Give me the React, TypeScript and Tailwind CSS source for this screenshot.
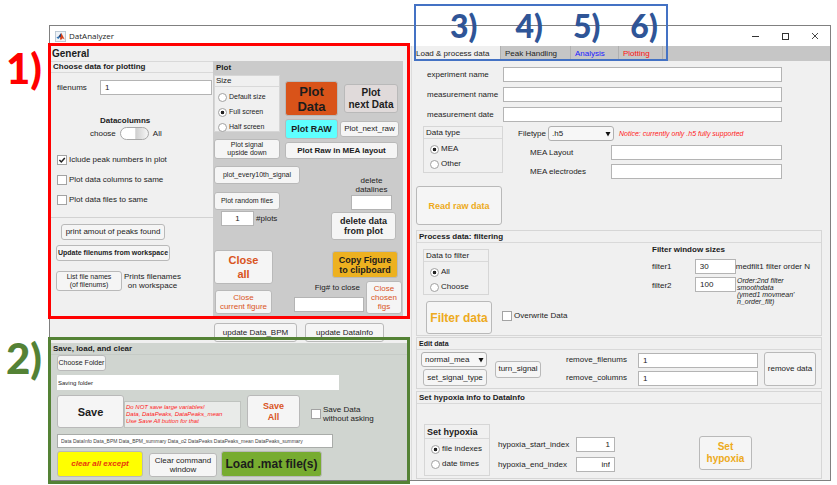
import { useId, useState, type ReactNode } from "react";
import clsx from "clsx";

const ARIAL = "font-['Liberation_Sans',Arial,sans-serif]";

function Btn({ className, children }: { className?: string; children: ReactNode }) {
  return (
    <button
      type="button"
      className={clsx(
        "flex shrink-0 items-center justify-center rounded-[3px] border border-[#b9b9b9] text-center whitespace-nowrap",
        className,
      )}
    >
      <span>{children}</span>
    </button>
  );
}

function TextBox({ id, label, value = "", className }: { id?: string; label?: string; value?: string; className?: string }) {
  return (
    <input
      id={id}
      type="text"
      aria-label={label}
      defaultValue={value}
      className={clsx("h-[15px] min-w-0 border border-[#b4b4b4] bg-white px-1 text-[#222]", className)}
    />
  );
}

function Field({
  label,
  value,
  className,
  labelClass,
  inputClass,
}: {
  label: string;
  value?: string;
  className?: string;
  labelClass: string;
  inputClass: string;
}) {
  const id = useId();
  return (
    <div className={clsx("flex items-center", className)}>
      <label htmlFor={id} className={clsx("shrink-0 whitespace-nowrap", labelClass)}>
        {label}
      </label>
      <TextBox id={id} value={value} className={inputClass} />
    </div>
  );
}

function Check({ label, checked, className }: { label: ReactNode; checked?: boolean; className?: string }) {
  const [on, setOn] = useState(!!checked);
  return (
    <label className={clsx("flex items-center gap-[2px]", className)}>
      <span className="relative flex size-[10px] shrink-0">
        <input
          type="checkbox"
          checked={on}
          onChange={() => setOn(!on)}
          className="size-[10px] appearance-none border border-[#a3a3a3] bg-white"
        />
        {on && (
          <svg viewBox="0 0 10 10" className="pointer-events-none absolute inset-0 size-[10px]">
            <path d="M2.4 5 L4.3 7 L7.8 2.9" fill="none" stroke="#222" strokeWidth="1.5" />
          </svg>
        )}
      </span>
      <span>{label}</span>
    </label>
  );
}

function Radios({
  title,
  options,
  selected,
  className,
  titleClass,
  listClass,
}: {
  title: string;
  options: string[];
  selected: number;
  className?: string;
  titleClass: string;
  listClass: string;
}) {
  const name = useId();
  return (
    <div role="radiogroup" aria-label={title} className={clsx("shrink-0 border border-[#d6d6d6] bg-[#f0f0f0]", className)}>
      <div className={clsx("flex items-center border-b border-[#d9d9d9]", titleClass)}>{title}</div>
      <div className={clsx("flex flex-col", listClass)}>
        {options.map((option, i) => (
          <label key={option} className="flex items-center gap-[2px] whitespace-nowrap">
            <input
              type="radio"
              name={name}
              defaultChecked={i === selected}
              className="size-[9px] appearance-none rounded-full border border-[#a0a0a0] bg-white checked:bg-[radial-gradient(circle,#222_32%,#fff_42%)]"
            />
            <span>{option}</span>
          </label>
        ))}
      </div>
    </div>
  );
}

function Pick({ id, label, value, className }: { id?: string; label?: string; value: string; className?: string }) {
  return (
    <span className={clsx("relative flex shrink-0", className)}>
      <select
        id={id}
        aria-label={label}
        defaultValue={value}
        className="h-[15px] w-full appearance-none rounded-[3px] border border-[#b0b0b0] bg-[#f7f7f7] pl-[3px] text-[#222]"
      >
        <option>{value}</option>
      </select>
      <svg viewBox="0 0 6 5" className="pointer-events-none absolute top-[6px] right-[3px] h-[5px] w-[6px]">
        <path d="M0.5 0h5L3 4.5z" fill="#111" />
      </svg>
    </span>
  );
}

function MatlabLogo() {
  return (
    <svg viewBox="0 0 12 12" className="size-[11px]">
      <rect x="0.5" y="0.5" width="11" height="11" fill="#eef3f8" stroke="#b9c6d2" />
      <path d="M1.5 7 L4 5.6 L5.2 7.2 L3.6 8.6z" fill="#2f74b5" />
      <path d="M4 5.6 L6.8 2 L6.4 6.5 L5.2 7.2z" fill="#243c6b" />
      <path d="M6.8 2 L10.6 9.2 L8.4 8 L6.2 10 L5.2 7.2 L6.4 6.5z" fill="#d6421b" />
    </svg>
  );
}

const SMALL = "text-[7px] leading-[8px]";
const LIGHT = "bg-[#f5f5f5]";
const AMBER = "text-[#edaa20]";
const RUST = "text-[#d9541e]";
const CALLOUT = "pointer-events-none absolute font-['Lato',sans-serif] font-black";

function ChoosePanel() {
  const filenums = useId();
  return (
    <div className="w-[163px] shrink-0">
      <h2 className="flex h-3 items-center border-y border-[#d9d9d9] pl-[3px] font-bold">Choose data for plotting</h2>
      <div className="flex flex-col border-b border-[#d2d2d2] pt-[7px] pb-3 pl-[7px]">
        <div className="flex items-center pr-px">
          <label htmlFor={filenums} className="w-[43px]">filenums</label>
          <TextBox id={filenums} value="1" className="flex-1" />
        </div>
        <div className="mt-5 flex flex-col">
          <span className="pl-[43px] leading-[12px] font-bold">Datacolumns</span>
          <label className="flex items-center gap-1 pl-[33px]">
            <span>choose</span>
            <input
              type="checkbox"
              role="switch"
              className="h-[13px] w-[29px] appearance-none rounded-full border border-[#a8a8a8] bg-[linear-gradient(90deg,#fff_50%,#cfcfcf_55%,#f2f2f2_95%)]"
            />
            <span>All</span>
          </label>
        </div>
        <div className="mt-[15px] flex flex-col gap-[10px]">
          <Check label="Iclude peak numbers in plot" checked />
          <Check label="Plot data columns to same" />
          <Check label="Plot data files to same" />
        </div>
      </div>
      <div className="flex flex-col items-start pt-[6px] pl-[6px]">
        <Btn className={clsx(LIGHT, "ml-[5px] h-4 w-[104px]")}>print amout of peaks found</Btn>
        <Btn className={clsx(LIGHT, SMALL, "mt-[5px] h-4 w-[114px] font-bold")}>Update filenums from workspace</Btn>
        <div className="mt-[10px] flex items-center gap-[2px]">
          <Btn className={clsx(LIGHT, SMALL, "h-5 w-[66px]")}>
            List file names
            <br />
            (of filenums)
          </Btn>
          <span className="text-center leading-[9px]">
            Prints filenames
            <br />
            on workspace
          </span>
        </div>
      </div>
    </div>
  );
}

function PlotPanel() {
  const plots = useId();
  const lines = useId();
  const fig = useId();
  return (
    <div className="mr-2 min-w-0 flex-1 bg-[#cbcbcb] pl-px">
      <h2 className="flex h-[14px] items-center pl-[2px] font-bold">Plot</h2>
      <div className="flex">
        <div className="flex w-[66px] shrink-0 flex-col gap-[7px]">
          <Radios
            title="Size"
            options={["Default size", "Full screen", "Half screen"]}
            selected={1}
            className="h-[57px]"
            titleClass="h-[11px] pl-px"
            listClass="gap-[5px] pt-[5px] pl-[3px] text-[7px] leading-[10px]"
          />
          <Btn className={clsx(LIGHT, SMALL, "h-5")}>
            Plot signal
            <br />
            upside down
          </Btn>
        </div>
        <div className="ml-[5px] flex flex-col gap-[3px] pt-[6px] font-bold">
          <div className="flex items-center gap-[6px]">
            <Btn className="h-[35px] w-[53px] bg-[#d95319] text-[13px] leading-[15px]">
              Plot
              <br />
              Data
            </Btn>
            <Btn className="h-[29px] w-[54px] bg-[#e0dada] text-[10px] leading-[12px]">
              Plot
              <br />
              next Data
            </Btn>
          </div>
          <div className="flex items-center gap-[2px]">
            <Btn className="h-5 w-[53px] bg-[#5effff] text-[9px]">Plot RAW</Btn>
            <Btn className={clsx(LIGHT, "h-4 w-[59px] font-normal")}>Plot_next_raw</Btn>
          </div>
          <Btn className={clsx(LIGHT, "h-[17px] w-[113px]")}>Plot Raw in MEA layout</Btn>
        </div>
      </div>
      <div className="flex">
        <div className="flex w-[86px] shrink-0 flex-col items-start pt-[7px] pb-[2px]">
          <Btn className={clsx(LIGHT, SMALL, "h-[18px] w-[86px]")}>plot_every10th_signal</Btn>
          <Btn className={clsx(LIGHT, SMALL, "mt-2 h-[18px] w-[66px]")}>Plot random files</Btn>
          <div className="mt-px ml-[7px] flex items-center gap-[2px]">
            <TextBox id={plots} value="1" className="w-[33px] text-center" />
            <label htmlFor={plots}>#plots</label>
          </div>
          <Btn className={clsx(LIGHT, RUST, "mt-6 h-[34px] w-[59px] text-[11px] leading-[14px] font-bold")}>
            Close
            <br />
            all
          </Btn>
          <Btn className={clsx(LIGHT, RUST, "mt-[6px] ml-px h-6 w-[57px] leading-[9px]")}>
            Close
            <br />
            current figure
          </Btn>
        </div>
        <div className="flex min-w-0 flex-1 flex-col items-end pt-[17px]">
          <div className="mr-[11px] flex w-[41px] flex-col">
            <label htmlFor={lines} className="pb-px text-center leading-[9px]">
              delete datalines
            </label>
            <TextBox id={lines} className="w-full" />
          </div>
          <Btn className={clsx(LIGHT, "mt-[2px] mr-[7px] h-7 w-[65px] text-[9px] leading-[10px] font-bold")}>
            delete data
            <br />
            from plot
          </Btn>
          <Btn className="mt-[11px] mr-[5px] h-[27px] w-[66px] bg-[#edb120] text-[9px] leading-[10px] font-bold">
            Copy Figure
            <br />
            to clipboard
          </Btn>
          <div className="mt-[3px] mr-px flex shrink-0 gap-[2px]">
            <div className="flex w-[70px] flex-col pt-[2px]">
              <label htmlFor={fig} className="pr-1 pb-1 text-right">
                Fig# to close
              </label>
              <TextBox id={fig} className="w-full" />
            </div>
            <Btn className={clsx(LIGHT, RUST, "h-[33px] w-9 leading-[9px]")}>
              Close
              <br />
              chosen
              <br />
              figs
            </Btn>
          </div>
        </div>
      </div>
    </div>
  );
}

function SavePanel() {
  return (
    <section className="relative mr-1 ml-px bg-[#d0d5d0] pb-[3px]">
      <h2 className="flex h-3 items-center border-b border-[#c6cbc6] pl-[2px] font-bold">Save, load, and clear</h2>
      <div className="flex flex-col items-start pl-[6px]">
        <Btn className={clsx(LIGHT, "h-4 w-[49px] text-[7px]")}>Choose Folder</Btn>
        <div className="mt-1 flex w-full pr-[68px]">
          <input
            type="text"
            aria-label="Saving folder"
            defaultValue="Saving folder"
            className="h-[15px] min-w-0 flex-1 bg-white pl-px text-[6px]"
          />
        </div>
        <div className="mt-[5px] flex items-end">
          <Btn className={clsx(LIGHT, "h-[33px] w-[67px] text-[11px] font-bold")}>Save</Btn>
          <p className="flex h-[27px] w-[117px] items-center border border-[#bfc3bf] bg-[#e9ebe9] pl-px text-[6px] leading-[7px] whitespace-nowrap text-[#ff1a1a] italic">
            Do NOT save large variables!
            <br />
            Data, DataPeaks, DataPeaks_mean
            <br />
            Use Save All button for that
          </p>
          <Btn className={clsx(LIGHT, RUST, "ml-[6px] h-[33px] w-[53px] text-[9px] leading-[11px] font-bold")}>
            Save
            <br />
            All
          </Btn>
          <Check
            className="mb-[5px] ml-[11px] leading-[9px]"
            label={
              <>
                Save Data
                <br />
                without asking
              </>
            }
          />
        </div>
        <div className="mt-[6px] flex w-full pr-[74px]">
          <input
            type="text"
            aria-label="Variables to keep"
            defaultValue="Data DataInfo Data_BPM Data_BPM_summary Data_o2 DataPeaks DataPeaks_mean DataPeaks_summary"
            className="h-[14px] min-w-0 flex-1 border border-[#a9aca9] bg-white pl-[3px] text-[5px] text-[#444]"
          />
        </div>
        <div className="mt-[3px] flex items-end">
          <Btn className="h-[26px] w-[86px] bg-[#ffff00] font-bold text-[#e8380c] italic">clear all except</Btn>
          <Btn className={clsx(LIGHT, "ml-[6px] h-6 w-[68px] leading-[9px]")}>
            Clear command
            <br />
            window
          </Btn>
          <Btn className="ml-1 h-[26px] w-[101px] bg-[#77ac30] text-[12px] font-bold">Load .mat file(s)</Btn>
        </div>
      </div>
      <div className="pointer-events-none absolute -top-[6px] -right-[3px] -bottom-1 -left-[3px] border-3 border-[#548235]" />
      <span className={clsx(CALLOUT, "-top-[10px] -left-[45px] text-[42px] leading-[50px] text-[#548235]")}>2)</span>
    </section>
  );
}

function Tabs() {
  const tab = "flex h-[15px] items-center border-r border-[#b0b0b0] pl-1 text-left whitespace-nowrap";
  return (
    <div className="relative flex bg-[#c6c6c6]" role="tablist">
      <button type="button" role="tab" aria-selected="true" className={clsx(tab, "w-[89px] bg-[#f0f0f0]")}>
        Load &amp; process data
      </button>
      <button type="button" role="tab" aria-selected="false" className={clsx(tab, "w-[70px]")}>
        Peak Handling
      </button>
      <button type="button" role="tab" aria-selected="false" className={clsx(tab, "w-[48px] text-[#2020ff]")}>
        Analysis
      </button>
      <button type="button" role="tab" aria-selected="false" className={clsx(tab, "w-[44px] text-[#ff1010]")}>
        Plotting
      </button>
      <div
        className={clsx(
          CALLOUT,
          "-top-[42px] left-[2px] flex h-[57px] w-[254px] gap-[30px] border-2 border-[#4472c4] pl-[34px] text-[32px] leading-[40px] text-[#2f5597]",
        )}
      >
        <span>3)</span>
        <span className="pl-2">4)</span>
        <span>5)</span>
        <span>6)</span>
      </div>
    </div>
  );
}

function LoadSection() {
  const filetype = useId();
  return (
    <div className="flex flex-col pt-[6px] pl-1">
      <div className="flex flex-col gap-[5px] pr-12 pl-[11px]">
        <Field label="experiment name" labelClass="w-[76px]" inputClass="flex-1" />
        <Field label="measurement name" labelClass="w-[76px]" inputClass="flex-1" />
        <Field label="measurement date" labelClass="w-[76px]" inputClass="flex-1" />
      </div>
      <div className="mt-1 flex pl-[7px]">
        <Radios
          title="Data type"
          options={["MEA", "Other"]}
          selected={0}
          className="h-[47px] w-20"
          titleClass="h-3 pl-[2px]"
          listClass="gap-[5px] pt-[5px] pl-[6px] leading-[10px]"
        />
        <div className="ml-[15px] flex min-w-0 flex-1 flex-col gap-1 pr-12">
          <div className="flex items-center whitespace-nowrap">
            <label htmlFor={filetype} className="w-[30px]">Filetype</label>
            <Pick id={filetype} value=".h5" className="w-[66px]" />
            <span className="ml-[5px] text-[7px] text-[#ff1a1a] italic">Notice: currently only .h5 fully supported</span>
          </div>
          <Field label="MEA Layout" className="pl-3" labelClass="w-[81px]" inputClass="flex-1" />
          <Field label="MEA electrodes" className="pl-3" labelClass="w-[81px]" inputClass="flex-1" />
        </div>
      </div>
      <Btn className={clsx(LIGHT, AMBER, "mt-[7px] h-[39px] w-[86px] text-[9px] font-bold")}>Read raw data</Btn>
    </div>
  );
}

const PANEL = "mr-2 ml-1 border border-[#d6d6d6]";
const PANEL_TITLE = "flex h-3 items-center border-b border-[#d9d9d9] pl-[2px] font-bold";

function FilterPanel() {
  const f1 = useId();
  const f2 = useId();
  return (
    <section className={clsx(PANEL, "mt-[5px]")}>
      <h2 className={PANEL_TITLE}>Process data: filtering</h2>
      <div className="flex justify-between pt-[6px] pr-[11px] pb-px pl-[6px]">
        <div className="flex flex-col">
          <Radios
            title="Data to filter"
            options={["All", "Choose"]}
            selected={0}
            className="h-[46px] w-[66px]"
            titleClass="h-3 pl-[2px]"
            listClass="gap-[5px] pt-[5px] pl-[6px] leading-[10px]"
          />
          <div className="mt-[6px] ml-[3px] flex items-center gap-[10px]">
            <Btn className={clsx(LIGHT, AMBER, "h-[33px] w-[66px] text-[12px] font-bold")}>Filter data</Btn>
            <Check label="Overwrite Data" className="pb-[3px]" />
          </div>
        </div>
        <div className="flex w-[158px] flex-col">
          <h3 className="-mt-1 h-[14px] font-bold">Filter window sizes</h3>
          <div className="flex items-center whitespace-nowrap">
            <label htmlFor={f1} className="w-[43px]">filter1</label>
            <TextBox id={f1} value="30" className="w-[41px]" />
            <span>medfilt1 filter order N</span>
          </div>
          <div className="mt-[3px] flex items-start whitespace-nowrap">
            <label htmlFor={f2} className="w-[43px] pt-1">filter2</label>
            <TextBox id={f2} value="100" className="w-[41px]" />
            <span className="pl-px text-[7px] leading-[7px] italic">
              Order:2nd filter
              <br />
              smoothdata
              <br />
              (ymed1 movmean'
              <br />
              n_order_filt)
            </span>
          </div>
        </div>
      </div>
    </section>
  );
}

function EditPanel() {
  return (
    <section className={clsx(PANEL, "mt-px")}>
      <h2 className={clsx(PANEL_TITLE, "text-[7px]")}>Edit data</h2>
      <div className="flex items-center pt-[2px] pr-3 pb-[2px] pl-[4px]">
        <div className="flex flex-col items-end gap-[2px]">
          <Pick label="Signal type" value="normal_mea" className="w-[66px]" />
          <Btn className={clsx(LIGHT, "h-[17px] w-[64px]")}>set_signal_type</Btn>
        </div>
        <Btn className={clsx(LIGHT, "ml-[8px] h-[17px] w-[46px]")}>turn_signal</Btn>
        <div className="ml-[25px] flex flex-1 flex-col gap-[3px]">
          <Field label="remove_filenums" value="1" labelClass="w-[72px]" inputClass="flex-1" />
          <Field label="remove_columns" value="1" labelClass="w-[72px]" inputClass="flex-1" />
        </div>
        <Btn className={clsx(LIGHT, "ml-[6px] h-[34px] w-[52px]")}>remove data</Btn>
      </div>
    </section>
  );
}

function HypoxiaPanel() {
  return (
    <section className={clsx(PANEL, "mt-[2px]")}>
      <h2 className={PANEL_TITLE}>Set hypoxia info to DataInfo</h2>
      <div className="flex items-start pt-5 pb-[2px] pl-[7px]">
        <Radios
          title="Set hypoxia"
          options={["file indexes", "date times"]}
          selected={0}
          className="h-[52px] w-[66px]"
          titleClass="h-[14px] pl-[2px] text-[9px] font-bold"
          listClass="gap-[5px] pt-[5px] pl-[6px] leading-[10px]"
        />
        <div className="ml-2 flex flex-col gap-[5px] pt-[13px]">
          <Field label="hypoxia_start_index" value="1" labelClass="w-[78px]" inputClass="w-[39px] text-right" />
          <Field label="hypoxia_end_index" value="inf" labelClass="w-[78px]" inputClass="w-[39px] text-right" />
        </div>
        <div className="flex flex-1 justify-end pt-3 pr-[69px]">
          <Btn className={clsx(LIGHT, AMBER, "h-[34px] w-[53px] text-[10px] leading-[12px] font-bold")}>
            Set
            <br />
            hypoxia
          </Btn>
        </div>
      </div>
    </section>
  );
}

export default function App() {
  return (
    <div className={clsx(ARIAL, "min-h-screen bg-white pt-[25px] pr-[6px] pb-[3px] pl-[49px] text-[8px] leading-[10px] text-[#1c1c1c]")}>
      <main className="border border-[#808080] bg-[#f0f0f0]">
        <header className="flex h-5 items-center bg-white pl-[5px] font-['Open_Sans',sans-serif]">
          <MatlabLogo />
          <h1 className="flex-1 pl-[3px]">DatAnalyzer</h1>
          <div className="flex gap-[22px] pr-[11px]">
            <button type="button" aria-label="Minimize">
              <svg viewBox="0 0 8 8" className="size-2"><path d="M1 4.5h7" stroke="#333" /></svg>
            </button>
            <button type="button" aria-label="Maximize">
              <svg viewBox="0 0 8 8" className="size-2"><rect x="1.5" y="1.5" width="6" height="6" fill="none" stroke="#333" /></svg>
            </button>
            <button type="button" aria-label="Close">
              <svg viewBox="0 0 8 8" className="size-2"><path d="M1 1l6 6M7 1L1 7" stroke="#333" strokeWidth="0.9" /></svg>
            </button>
          </div>
        </header>
        <div className="grid grid-cols-[361fr_419fr]">
          <div className="flex min-w-0 flex-col">
            <section className="relative">
              <h2 className="flex h-[15px] items-center pl-[2px] text-[10px] font-bold">General</h2>
              <div className="flex">
                <ChoosePanel />
                <PlotPanel />
              </div>
              <div className="pointer-events-none absolute -top-[3px] right-px -bottom-[3px] -left-[2px] border-3 border-[#ff0000]" />
              <span className={clsx(CALLOUT, "-top-[3px] -left-11 text-[42px] leading-[50px] text-[#ff0000]")}>1)</span>
            </section>
            <div className="flex gap-2 pt-[7px] pb-px pl-[164px]">
              <Btn className={clsx(LIGHT, "h-[19px] w-[83px]")}>update Data_BPM</Btn>
              <Btn className={clsx(LIGHT, "h-[19px] w-[79px]")}>update DataInfo</Btn>
            </div>
            <SavePanel />
          </div>
          <div className="min-w-0 border-l border-[#dcdcdc]">
            <Tabs />
            <LoadSection />
            <FilterPanel />
            <EditPanel />
            <HypoxiaPanel />
          </div>
        </div>
      </main>
    </div>
  );
}
